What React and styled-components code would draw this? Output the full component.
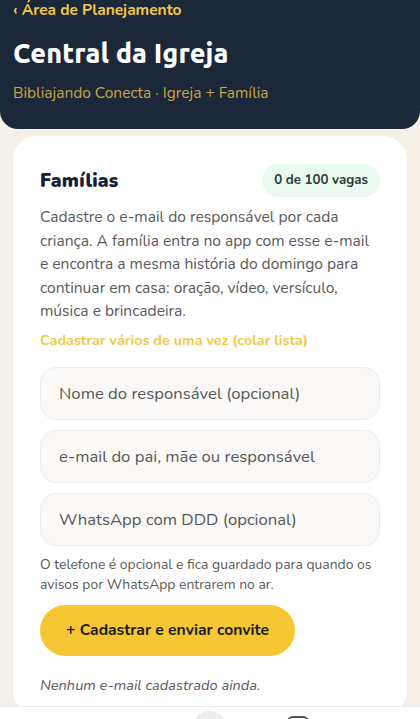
import React from "react";
import styled, { createGlobalStyle } from "styled-components";

const Global = createGlobalStyle`
  html, body { margin: 0; padding: 0; background: #f5f1e8; }
  body { font-family: "Nunito", "Noto Sans", "Open Sans", sans-serif; -webkit-font-smoothing: antialiased; }
  * { box-sizing: border-box; }
`;

const Page = styled.div`
  height: 719px;
  overflow: hidden;
  display: flex;
  flex-direction: column;
  background: #f5f1e8;
  position: relative;
`;

const Header = styled.header`
  background: #1b2839;
  border-radius: 0 0 18px 18px;
  padding: 0 13px;
  height: 129px;
  display: flex;
  flex-direction: column;
  flex-shrink: 0;
`;

const Back = styled.div`
  color: #f2c744;
  font-size: 15.5px;
  font-weight: 700;
  line-height: 19px;
`;

const Title = styled.h1`
  margin: 19px 0 0;
  color: #ffffff;
  font-family: "Ubuntu", "Noto Sans", sans-serif;
  font-size: 27px;
  font-weight: 800;
  line-height: 30px;
  letter-spacing: 0.1px;
`;

const Subtitle = styled.div`
  margin-top: 16px;
  color: #c8a444;
  font-size: 15.5px;
  line-height: 18px;
`;

const Main = styled.main`
  padding: 7px 13px 0;
  flex: 1;
`;

const Card = styled.section`
  background: #ffffff;
  border-radius: 24px;
  padding: 28px 27px 20px;
  display: flex;
  flex-direction: column;
`;

const CardHead = styled.div`
  display: flex;
  align-items: center;
  justify-content: space-between;
`;

const CardTitle = styled.h2`
  margin: 0;
  color: #14203a;
  font-size: 19px;
  font-weight: 900;
  letter-spacing: 0.2px;
`;

const Badge = styled.span`
  background: #eafaf1;
  color: #2b3a33;
  font-size: 13.3px;
  font-weight: 700;
  border-radius: 999px;
  padding: 8px 12px;
  line-height: 17px;
`;

const Lead = styled.p`
  margin: 9px 0 0;
  color: #5a5a5a;
  font-size: 15.6px;
  line-height: 23.5px;
`;

const LinkText = styled.a`
  margin-top: 6px;
  color: #f4c844;
  font-size: 14.4px;
  font-weight: 700;
  line-height: 20px;
  text-decoration: none;
`;

const Fields = styled.div`
  margin-top: 17px;
  display: flex;
  flex-direction: column;
  gap: 10px;
`;

const Input = styled.input`
  height: 53px;
  width: 100%;
  border: 1px solid #efedeb;
  background: #faf9f8;
  border-radius: 16px;
  padding: 0 18px;
  font-family: inherit;
  font-size: 16.7px;
  color: #333;
  outline: none;
  &::placeholder { color: #575757; }
`;

const Help = styled.p`
  margin: 9px 0 0;
  color: #595959;
  font-size: 13.9px;
  line-height: 20px;
`;

const Button = styled.button`
  margin-top: 10px;
  align-self: flex-start;
  height: 51px;
  padding: 0 26px;
  border: none;
  border-radius: 999px;
  background: #f6c633;
  color: #1c1c1c;
  font-family: inherit;
  font-size: 15.7px;
  font-weight: 700;
`;

const Empty = styled.p`
  margin: 19px 0 0;
  color: #595959;
  font-style: italic;
  font-size: 14.6px;
  line-height: 20px;
`;

const Nav = styled.nav`
  position: absolute;
  left: 0;
  right: 0;
  top: 706px;
  height: 40px;
  background: #fff;
  border-top: 1px solid #ececec;
`;

const NavDot = styled.span`
  position: absolute;
  left: 193px;
  top: 4px;
  width: 33px;
  height: 33px;
  border-radius: 50%;
  background: #ededed;
`;

const NavIcon = styled.span`
  position: absolute;
  left: 287px;
  top: 9px;
  width: 22px;
  height: 20px;
  border-radius: 6px;
  border: 2px solid #555;
`;

export default function App() {
  return (
    <Page>
      <Global />
      <Header>
        <Back>‹ Área de Planejamento</Back>
        <Title>Central da Igreja</Title>
        <Subtitle>Bibliajando Conecta · Igreja + Família</Subtitle>
      </Header>
      <Main>
        <Card>
          <CardHead>
            <CardTitle>Famílias</CardTitle>
            <Badge>0 de 100 vagas</Badge>
          </CardHead>
          <Lead>
            Cadastre o e-mail do responsável por cada criança. A família entra no app com esse e-mail e encontra a mesma história do domingo para continuar em casa: oração, vídeo, versículo, música e brincadeira.
          </Lead>
          <LinkText href="#">Cadastrar vários de uma vez (colar lista)</LinkText>
          <Fields>
            <Input placeholder="Nome do responsável (opcional)" />
            <Input placeholder="e-mail do pai, mãe ou responsável" />
            <Input placeholder="WhatsApp com DDD (opcional)" />
          </Fields>
          <Help>O telefone é opcional e fica guardado para quando os avisos por WhatsApp entrarem no ar.</Help>
          <Button>+ Cadastrar e enviar convite</Button>
          <Empty>Nenhum e-mail cadastrado ainda.</Empty>
        </Card>
      </Main>
      <Nav>
        <NavDot />
        <NavIcon />
      </Nav>
    </Page>
  );
}
